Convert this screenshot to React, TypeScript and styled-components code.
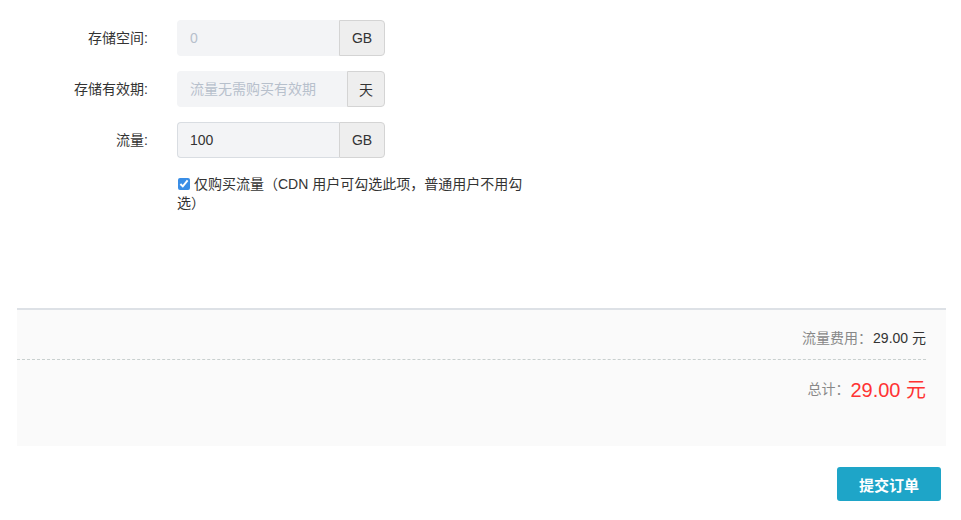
import { FC } from 'react';
import styled, { createGlobalStyle } from 'styled-components';

const GlobalStyle = createGlobalStyle`
  html, body {
    margin: 0;
    padding: 0;
    background: #fff;
    font-family: "Liberation Sans", "Noto Sans CJK SC", sans-serif;
    color: #333;
  }
`;

const Page = styled.div`
  width: 961px;
  height: 520px;
  display: flex;
  flex-direction: column;
  overflow: hidden;
`;

const Form = styled.div`
  display: flex;
  flex-direction: column;
  gap: 15px;
  padding-top: 20px;
  height: 308px;
  box-sizing: border-box;
`;

const Row = styled.div`
  display: grid;
  grid-template-columns: 148px 208px;
  column-gap: 29px;
  align-items: center;
`;

const Label = styled.label`
  text-align: right;
  font-size: 14px;
  color: #333;
  margin-top: -2px;
`;

const InputGroup = styled.div`
  display: flex;
  height: 36px;
`;

const Field = styled.input<{ $bordered?: boolean }>`
  flex: 1;
  min-width: 0;
  box-sizing: border-box;
  height: 36px;
  padding: 0 12px;
  border: 1px solid ${(p) => (p.$bordered ? '#d9dde2' : '#f3f4f6')};
  border-right: none;
  border-radius: 4px 0 0 4px;
  background: #f3f4f6;
  font-family: inherit;
  font-size: 14px;
  color: #333;
  outline: none;
  &::placeholder {
    color: #b7c0cc;
  }
`;

const Addon = styled.span<{ $w: number }>`
  width: ${(p) => p.$w}px;
  box-sizing: border-box;
  display: flex;
  align-items: center;
  justify-content: center;
  background: #eee;
  border: 1px solid #d4d4d4;
  border-radius: 0 4px 4px 0;
  font-size: 14px;
  color: #333;
`;

const CheckWrap = styled.label`
  margin-left: 177px;
  margin-top: 2px;
  width: 360px;
  font-size: 14px;
  line-height: 19px;
  color: #333;
`;

const Check = styled.input`
  width: 12px;
  height: 12px;
  margin: 0 4px 0 1px;
  vertical-align: -1px;
  accent-color: #3a8ee6;
`;

const Summary = styled.div`
  margin: 0 15px 0 17px;
  height: 136px;
  background: #fafafa;
  border-top: 2px solid #dde1e6;
  display: flex;
  flex-direction: column;
`;

const FeeRow = styled.div`
  display: flex;
  justify-content: flex-end;
  align-items: center;
  height: 50px;
  padding-top: 4px;
  box-sizing: border-box;
  margin-right: 20px;
  border-bottom: 1px dashed #c9d0cf;
`;

const TotalRow = styled.div`
  display: flex;
  justify-content: flex-end;
  align-items: center;
  height: 56px;
  margin-right: 20px;
`;

const Key = styled.span`
  color: #888;
  font-size: 14px;
  margin-right: 1px;
`;

const Value = styled.span<{ $big?: boolean }>`
  color: ${(p) => (p.$big ? '#ff3333' : '#333')};
  font-size: ${(p) => (p.$big ? '20px' : '14px')};
`;

const Footer = styled.div`
  display: flex;
  justify-content: flex-end;
  padding: 21px 20px 0 0;
`;

const SubmitButton = styled.button`
  width: 104px;
  height: 34px;
  border: none;
  border-radius: 3px;
  background: #1ea5c8;
  color: #fff;
  font-family: inherit;
  font-size: 15px;
  font-weight: bold;
  cursor: pointer;
`;

const App: FC = () => (
  <Page>
    <GlobalStyle />
    <Form>
      <Row>
        <Label>存储空间:</Label>
        <InputGroup>
          <Field placeholder='0' disabled />
          <Addon $w={46}>GB</Addon>
        </InputGroup>
      </Row>
      <Row>
        <Label>存储有效期:</Label>
        <InputGroup>
          <Field placeholder='流量无需购买有效期' disabled />
          <Addon $w={38}>天</Addon>
        </InputGroup>
      </Row>
      <Row>
        <Label>流量:</Label>
        <InputGroup>
          <Field $bordered defaultValue='100' />
          <Addon $w={46}>GB</Addon>
        </InputGroup>
      </Row>
      <CheckWrap>
        <Check type='checkbox' defaultChecked />
        仅购买流量（CDN 用户可勾选此项，普通用户不用勾选）
      </CheckWrap>
    </Form>
    <Summary>
      <FeeRow>
        <Key>流量费用：</Key>
        <Value>29.00 元</Value>
      </FeeRow>
      <TotalRow>
        <Key>总计：</Key>
        <Value $big>29.00 元</Value>
      </TotalRow>
    </Summary>
    <Footer>
      <SubmitButton>提交订单</SubmitButton>
    </Footer>
  </Page>
);

export default App;
